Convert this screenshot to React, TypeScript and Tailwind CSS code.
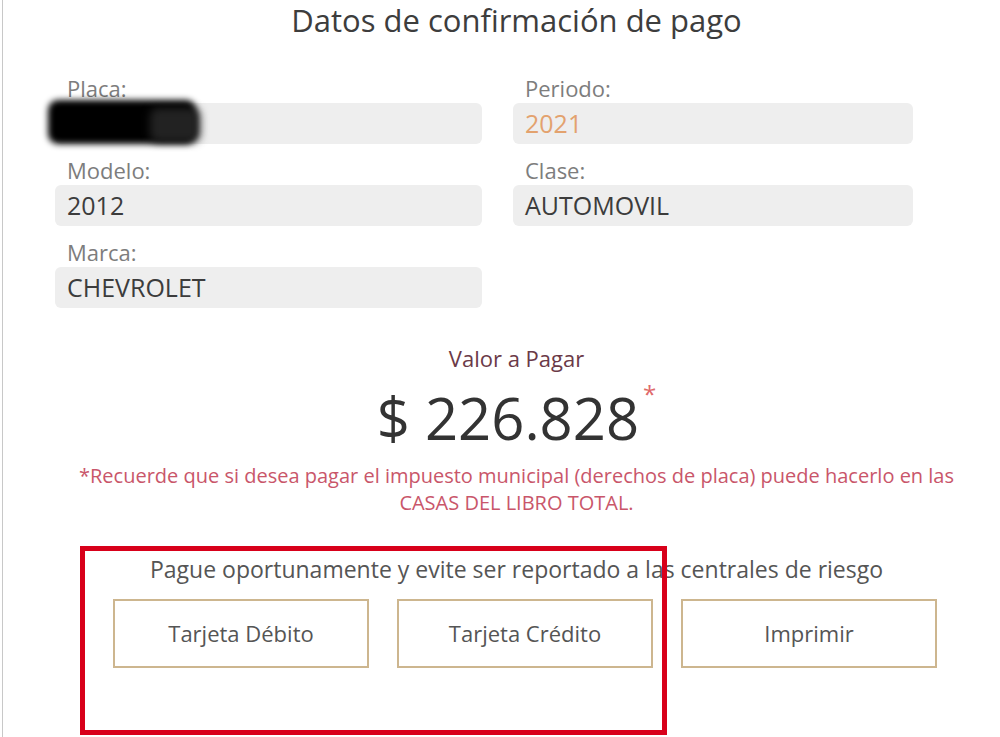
const fields = [
  { label: "Placa:", value: "", tone: "text-[#3c3c3c]" },
  { label: "Periodo:", value: "2021", tone: "text-[#e3a26e]" },
  { label: "Modelo:", value: "2012", tone: "text-[#3c3c3c]" },
  { label: "Clase:", value: "AUTOMOVIL", tone: "text-[#3c3c3c]" },
  { label: "Marca:", value: "CHEVROLET", tone: "text-[#3c3c3c]" },
];

function Field({ label, value, tone }: { label: string; value: string; tone: string }) {
  return (
    <div className="flex flex-col">
      <span className="h-[29px] pl-[12px] text-[22px] leading-[29px] text-[#7d7d7d]">{label}</span>
      <div className={`h-[41px] rounded-[6px] bg-[#eeeeee] pl-[12px] text-[25px] leading-[41px] ${tone}`}>
        {value}
      </div>
    </div>
  );
}

export default function App() {
  const btn =
    "flex h-[69px] w-[256px] items-center justify-center border-2 border-[#cdb68f] bg-white text-[22px] text-[#555555]";

  return (
    <div
      className="relative h-[737px] w-[1000px] overflow-hidden bg-white"
      style={{ fontFamily: '"Open Sans", "Noto Sans", sans-serif' }}
    >
      <div className="ml-[2px] h-full border-l border-[#c8c8c8]">
        <h1 className="pl-[30px] text-center text-[31px] leading-[40px] text-[#3d3d3d]">
          Datos de confirmación de pago
        </h1>

        <div className="mt-[34px] ml-[52px] grid grid-cols-[427px_400px] gap-x-[31px] gap-y-[12px]">
          {fields.map((f) => (
            <Field key={f.label} {...f} />
          ))}
        </div>

        <div className="pl-[30px] text-center">
          <p className="mt-[35px] text-[22px] leading-[30px] text-[#6b3a48]">Valor a Pagar</p>
          <p className="mt-[13px] text-[58px] leading-[64px] text-[#333333]">
            $ 226.828
            <span className="relative top-[-4px] ml-[4px] align-top text-[24px] leading-none text-[#e06a6a]">*</span>
          </p>
          <p className="mx-auto mt-[12px] w-[900px] text-[20px] leading-[27px] text-[#c9566a]">
            *Recuerde que si desea pagar el impuesto municipal (derechos de placa) puede hacerlo en las CASAS DEL
            LIBRO TOTAL.
          </p>
          <p className="mt-[38px] text-[23px] leading-[30px] text-[#555555]">
            Pague oportunamente y evite ser reportado a las centrales de riesgo
          </p>
        </div>

        <div className="mt-[15px] flex gap-[28px] pl-[110px]">
          <button className={btn}>Tarjeta Débito</button>
          <button className={btn}>Tarjeta Crédito</button>
          <button className={btn}>Imprimir</button>
        </div>
      </div>

      {/* redaction scribble over the plate value */}
      <div className="absolute left-[48px] top-[100px] h-[44px] w-[148px] rounded-[10px] bg-black blur-[3px]" />
      <div className="absolute left-[150px] top-[108px] h-[34px] w-[50px] rounded-[8px] bg-[#222222] blur-[4px]" />

      {/* red annotation frame */}
      <div className="pointer-events-none absolute left-[80px] top-[546px] h-[189px] w-[587px] border-[5px] border-[#d8001a]" />
    </div>
  );
}
